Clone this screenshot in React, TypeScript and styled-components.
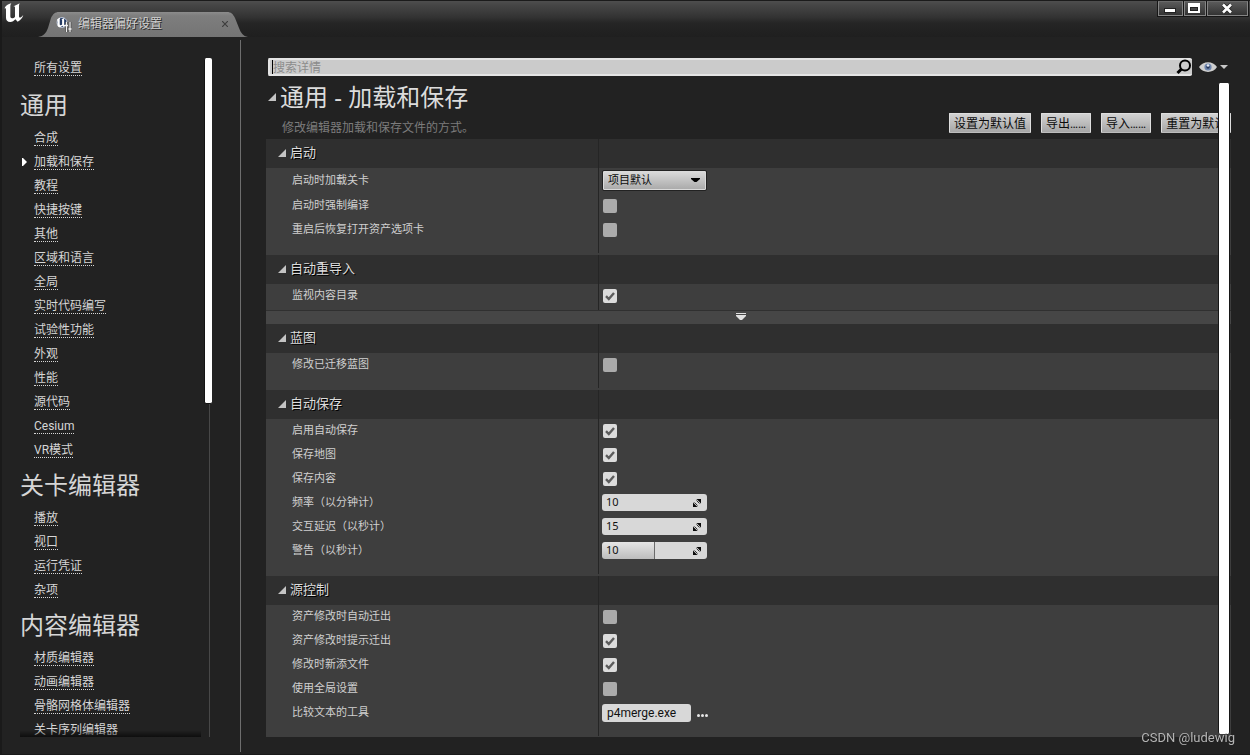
import React, { useState } from "react";
import styled, { createGlobalStyle } from "styled-components";

const GlobalStyle = createGlobalStyle`
  *, *::before, *::after { box-sizing: border-box; }
  body {
    margin: 0;
    background: #222222;
    color: #d6d6d6;
    font: 12px/16px Roboto, "Noto Sans CJK SC", sans-serif;
  }
  button, input, select { font: inherit; margin: 0; }
  ul { margin: 0; padding: 0; list-style: none; }
  h1, h2, h3, p { margin: 0; font-weight: 400; }
`;

const Window = styled.div`
  display: flex;
  flex-direction: column;
  height: 100vh;
  border: solid #1a1a1a;
  border-width: 0 0 1px 2px;
  background: #222222;
  overflow: hidden;
`;

const TitleBar = styled.header`
  display: flex;
  align-items: flex-start;
  flex: none;
  height: 37px;
  border-top: 1px solid #1b1b1b;
  background: linear-gradient(#4e4e4e 0px, #464646 4px, #333333 16px, #252525 22px, #1f1f1f 36px);
`;

const EngineLogo = styled.svg`
  flex: none;
  width: 20px;
  height: 20px;
  margin: 2px 0 0 2px;
`;

const Tab = styled.div`
  position: relative;
  display: flex;
  align-items: center;
  flex: none;
  width: 210px;
  height: 25px;
  margin: 11px 0 0 14px;
  padding: 0 18px 0 18px;
`;

const TabShape = styled.svg`
  position: absolute;
  inset: 0;
  width: 100%;
  height: 100%;
`;

const TabIcon = styled.svg`
  position: relative;
  flex: none;
  width: 16px;
  height: 16px;
`;

const TabTitle = styled.span`
  position: relative;
  flex: 1;
  margin-left: 6px;
  padding-bottom: 2px;
  color: #cfcfcf;
  text-shadow: 1px 1px 0 #2a2a2a;
`;

const TabClose = styled.button`
  position: relative;
  display: grid;
  place-items: center;
  width: 10px;
  height: 18px;
  padding: 0 0 2px;
  border: 0;
  background: none;
`;

const WindowControls = styled.div`
  display: flex;
  gap: 1px;
  margin-left: auto;
  margin-right: 1px;
  padding: 0 1px 1px;
  background: #161616;
`;

const ControlButton = styled.button<{ $width: number }>`
  display: grid;
  place-items: center;
  width: ${(p) => p.$width}px;
  height: 15px;
  padding: 0 2px 1px 0;
  border: 1px solid #858585;
  border-top-color: #6a6a6a;
  background: linear-gradient(#5a5a5a, #333333);
`;

const Body = styled.div`
  display: flex;
  flex: 1;
  min-height: 0;
  padding: 3px 0 2px;
`;

const Sidebar = styled.nav`
  display: flex;
  flex: none;
  width: 239px;
  padding: 16px 28px 15px 18px;
  border-right: 1px solid #6e6e6e;
`;

const SidebarScroll = styled.div`
  position: relative;
  flex: 1;
  margin-right: 3px;
  overflow: hidden;
  &::after {
    content: "";
    position: absolute;
    left: 0;
    right: 0;
    bottom: 0;
    height: 7px;
    background: linear-gradient(rgba(0, 0, 0, 0), rgba(0, 0, 0, 0.6));
  }
`;

const SidebarTrack = styled.div`
  width: 8px;
  margin-top: 2px;
  background: linear-gradient(#484848, #484848) 5px 0 / 1px 100% no-repeat;
`;

const SidebarThumb = styled.div`
  height: 51%;
  border: 1px solid #141414;
  border-width: 0 0 1px 1px;
  border-radius: 2px;
  background: #ffffff;
`;

const CategoryTitle = styled.h2`
  height: 44px;
  padding-top: 2px;
  font-size: 24px;
  line-height: 44px;
`;

const NavItem = styled.li<{ $current?: boolean }>`
  display: flex;
  align-items: center;
  height: 24px;
  padding-left: ${(p) => (p.$current ? 1 : 14)}px;
`;

const NavLink = styled.a`
  border-bottom: 1px dotted #d6d6d6;
  color: #d6d6d6;
  line-height: 14px;
  text-decoration: none;
  white-space: nowrap;
`;

const CurrentMark = styled.svg`
  width: 6px;
  height: 8px;
  margin-right: 7px;
`;

const Main = styled.main`
  display: flex;
  flex-direction: column;
  flex: 1;
  min-width: 0;
  padding: 17px 19px 15px 25px;
`;

const SearchRow = styled.div`
  display: flex;
  align-items: center;
  flex: none;
  height: 20px;
  padding: 0 3px 0 2px;
`;

const SearchBox = styled.label`
  display: flex;
  align-items: center;
  flex: 1;
  height: 18px;
  padding: 0 0 0 2px;
  border: 2px solid #e4e4e4;
  border-right-width: 0;
  border-radius: 2px;
  background: #cbcbcb;
`;

const SearchInput = styled.input`
  flex: 1;
  min-width: 0;
  height: 14px;
  padding: 1px 0 0;
  border: 0;
  border-left: 1px solid #000000;
  outline: 0;
  background: none;
  color: #111111;
  &::placeholder { color: #8c8c8c; opacity: 1; }
`;

const ViewOptions = styled.button`
  display: flex;
  align-items: center;
  gap: 3px;
  margin-left: 7px;
  padding: 0;
  border: 0;
  background: none;
`;

const Details = styled.div`
  position: relative;
  flex: 1;
  min-height: 0;
  overflow: hidden;
`;

const DetailsThumb = styled.div`
  position: absolute;
  top: 6px;
  right: 1px;
  bottom: 3px;
  width: 12px;
  border: solid #161616;
  border-width: 0 1px;
  border-radius: 2px;
  background: #ffffff;
`;

const PageHeader = styled.div`
  display: flex;
  align-items: flex-end;
  height: 62px;
`;

const PageHeading = styled.div`
  flex: 1;
  min-width: 0;
  height: 100%;
`;

const PageTitle = styled.h1`
  display: flex;
  align-items: center;
  gap: 4px;
  height: 38px;
  padding-left: 2px;
  padding-top: 2px;
  color: #dcdcdc;
  font-family: "Noto Sans", "Noto Sans CJK SC", sans-serif;
  font-size: 24px;
  line-height: 32px;
`;

const PageNote = styled.p`
  padding: 5px 0 0 16px;
  color: #7c7c7c;
`;

const Actions = styled.div`
  display: flex;
  gap: 10px;
  flex: 0 0 282px;
  min-width: 0;
  width: 282px;
  padding-bottom: 6px;
`;

const ActionButton = styled.button<{ $fit?: boolean }>`
  flex: ${(p) => (p.$fit ? "0 1 auto" : "none")};
  min-width: 0;
  height: 20px;
  padding: 1px 4px 0;
  border: 1px solid #dedede;
  border-bottom-color: #bcbcbc;
  border-radius: 1px;
  background: linear-gradient(#d2d2d2, #a6a6a6);
  color: #0c0c0c;
  line-height: 18px;
  overflow: hidden;
  text-align: left;
  white-space: nowrap;
`;

const Section = styled.section`
  background: linear-gradient(#252525, #252525) 332px 0 / 1px calc(100% - 2px) no-repeat, #3e3e3e;
`;

const SectionHeader = styled.h3`
  display: flex;
  align-items: center;
  gap: 4px;
  height: 29px;
  padding: 0 0 2px 12px;
  background: linear-gradient(#252525, #252525) 332px 0 / 1px 100% no-repeat, #2f2f2f;
  color: #dcdcdc;
  font-size: 13px;
  line-height: 27px;
  text-shadow: 1px 1px 0 #000000;
`;

const Rows = styled.div<{ $tight?: boolean }>`
  padding-bottom: ${(p) => (p.$tight ? 2 : 13)}px;
`;

const Row = styled.div<{ $tall?: boolean }>`
  display: grid;
  grid-template-columns: 310px 1fr;
  align-items: center;
  height: ${(p) => (p.$tall ? 26 : 24)}px;
  padding-left: 26px;
`;

const RowLabel = styled.label`
  color: #d0d0d0;
  font-size: 11px;
`;

const RowValue = styled.div`
  display: flex;
  align-items: center;
  gap: 6px;
`;

const Expander = styled.button`
  display: grid;
  place-items: center;
  width: 100%;
  height: 14px;
  padding: 0 15px 2px 0;
  border: 0;
  border-top: 1px solid #303030;
  background: #464646;
`;

const SelectBox = styled.span`
  display: grid;
  align-items: center;
  width: 105px;
  height: 21px;
  margin-bottom: 2px;
  & > * { grid-area: 1 / 1; }
  & > svg { justify-self: end; margin-right: 7px; pointer-events: none; }
`;

const Select = styled.select`
  appearance: none;
  width: 100%;
  height: 21px;
  padding: 2px 20px 0 5px;
  border: 1px solid #222222;
  border-radius: 2px;
  background: linear-gradient(#dcdcdc, #a8a8a8);
  box-shadow: inset 0 0 0 1px #dadada;
  color: #0c0c0c;
  font-size: 11px;
`;

const CheckBox = styled.span`
  display: grid;
  place-items: center;
  width: 14px;
  height: 14px;
  margin-left: 1px;
  & > * { grid-area: 1 / 1; }
  & > svg { pointer-events: none; }
`;

const CheckInput = styled.input`
  appearance: none;
  width: 14px;
  height: 14px;
  border-radius: 2px;
  background: #ababab;
  &:checked { background: #dcdcdc; }
  &:not(:checked) + svg { visibility: hidden; }
`;

const SpinBox = styled.span<{ $fill?: boolean }>`
  display: flex;
  align-items: center;
  width: 105px;
  height: 17px;
  margin-bottom: 1px;
  padding: 0 6px 0 4px;
  border-radius: 3px;
  background: ${(p) =>
    p.$fill
      ? "linear-gradient(#6b6b6b, #6b6b6b) 52px 0 / 1px 100% no-repeat, linear-gradient(#e6e6e6, #bdbdbd) 0 0 / 52px 100% no-repeat, #d8d8d8"
      : "#d8d8d8"};
`;

const SpinInput = styled.input`
  flex: 1;
  min-width: 0;
  height: 17px;
  padding: 0 0 2px;
  border: 0;
  background: none;
  color: #111111;
  font-family: "Noto Sans", sans-serif;
  font-size: 11px;
`;

const TextInput = styled.input`
  width: 89px;
  height: 18px;
  padding: 0 5px;
  border: 0;
  border-radius: 3px;
  background: #d8d8d8;
  color: #111111;
`;

const BrowseButton = styled.button`
  display: grid;
  place-items: center;
  height: 18px;
  padding: 5px 0 0;
  border: 0;
  background: none;
`;

const Watermark = styled.div`
  position: fixed;
  right: 15px;
  bottom: 9px;
  color: #b4b4b4;
  font-size: 13px;
  text-shadow: 1px 1px 0 #222222;
`;

const AllSettings = styled.div`
  display: flex;
  align-items: center;
  height: 24px;
  margin-bottom: 2px;
  padding-left: 14px;
`;

const U_PATH =
  "M1 17C5 8 12 3 22 1C19 5 19 8 19 12V40C19 44 21 46 24 46C28 46 31 44 33 41V13C33 11 31 10 28 10C34 8 39 5 47 1C45 5 45 8 45 12V40C45 44 48 45 52 42L58 36C55 46 49 52 41 56L34 49C30 54 25 57 19 57C10 57 6 51 6 44V20C6 16 4 15 1 17Z";

const Triangle = () => (
  <svg width="8" height="8" viewBox="0 0 8 8" aria-hidden="true">
    <path d="M8 0V8H0Z" fill="#c4c4c4" />
  </svg>
);

const Check = ({ id, on }: { id: string; on?: boolean }) => {
  const [checked, setChecked] = useState(!!on);
  return (
    <CheckBox>
      <CheckInput id={id} type="checkbox" checked={checked} onChange={() => setChecked(!checked)} />
      <svg width="10" height="10" viewBox="0 0 10 10" aria-hidden="true">
        <path d="M1 5.2L3.8 8L9 2" fill="none" stroke="#5c5c5c" strokeWidth="2.4" />
      </svg>
    </CheckBox>
  );
};

const Spin = ({ id, value, fill }: { id: string; value: string; fill?: boolean }) => (
  <SpinBox $fill={fill}>
    <SpinInput id={id} type="text" inputMode="numeric" defaultValue={value} />
    <svg width="8" height="8" viewBox="0 0 8 8" aria-hidden="true">
      <path d="M3 0H8V5Q6.800 1.200 3 0ZM3.500 0H8V4.500ZM0 3V8H5Q1.200 6.800 0 3ZM0 3.500V8H4.500Z" fill="#0a0a0a" />
      <path d="M3.500 1.500L6.500 4.500M1.500 3.500L4.500 6.500" stroke="#0a0a0a" strokeWidth="0.800" />
    </svg>
  </SpinBox>
);

type Setting = { label: string; kind: "check" | "spin" | "select" | "text"; on?: boolean; value?: string; fill?: boolean };
type Group = { title: string; more?: boolean; rows: Setting[] };

const groups: Group[] = [
  {
    title: "启动",
    rows: [
      { label: "启动时加载关卡", kind: "select", value: "项目默认" },
      { label: "启动时强制编译", kind: "check" },
      { label: "重启后恢复打开资产选项卡", kind: "check" },
    ],
  },
  { title: "自动重导入", more: true, rows: [{ label: "监视内容目录", kind: "check", on: true }] },
  { title: "蓝图", rows: [{ label: "修改已迁移蓝图", kind: "check" }] },
  {
    title: "自动保存",
    rows: [
      { label: "启用自动保存", kind: "check", on: true },
      { label: "保存地图", kind: "check", on: true },
      { label: "保存内容", kind: "check", on: true },
      { label: "频率（以分钟计）", kind: "spin", value: "10" },
      { label: "交互延迟（以秒计）", kind: "spin", value: "15" },
      { label: "警告（以秒计）", kind: "spin", value: "10", fill: true },
    ],
  },
  {
    title: "源控制",
    rows: [
      { label: "资产修改时自动迁出", kind: "check" },
      { label: "资产修改时提示迁出", kind: "check", on: true },
      { label: "修改时新添文件", kind: "check", on: true },
      { label: "使用全局设置", kind: "check" },
      { label: "比较文本的工具", kind: "text", value: "p4merge.exe" },
    ],
  },
];

const categories = [
  {
    title: "通用",
    items: ["合成", "加载和保存", "教程", "快捷按键", "其他", "区域和语言", "全局", "实时代码编写", "试验性功能", "外观", "性能", "源代码", "Cesium", "VR模式"],
  },
  { title: "关卡编辑器", items: ["播放", "视口", "运行凭证", "杂项"] },
  { title: "内容编辑器", items: ["材质编辑器", "动画编辑器", "骨骼网格体编辑器", "关卡序列编辑器"] },
];

const SettingControl = ({ id, s }: { id: string; s: Setting }) => {
  if (s.kind === "check") return <Check id={id} on={s.on} />;
  if (s.kind === "spin") return <Spin id={id} value={s.value!} fill={s.fill} />;
  if (s.kind === "select")
    return (
      <SelectBox>
        <Select id={id}>
          <option>{s.value}</option>
        </Select>
        <svg width="9" height="4" viewBox="0 0 9 4" aria-hidden="true">
          <path d="M0 0H9V1L5.500 4H3.500L0 1Z" fill="#000" />
        </svg>
      </SelectBox>
    );
  return (
    <>
      <TextInput id={id} type="text" defaultValue={s.value} />
      <BrowseButton aria-label="浏览">
        <svg width="11" height="3" viewBox="0 0 11 3" aria-hidden="true">
          <g fill="#e6e6e6">
            <circle cx="1.5" cy="1.5" r="1.5" />
            <circle cx="5.5" cy="1.5" r="1.5" />
            <circle cx="9.5" cy="1.5" r="1.5" />
          </g>
        </svg>
      </BrowseButton>
    </>
  );
};

export default function App() {
  return (
    <Window>
      <GlobalStyle />
      <TitleBar>
        <EngineLogo viewBox="0 0 60 60" aria-hidden="true">
          <path d={U_PATH} fill="#fff" />
        </EngineLogo>
        <Tab>
          <TabShape viewBox="0 0 210 25" preserveAspectRatio="none" aria-hidden="true">
            <defs>
              <linearGradient id="tabFill" x1="0" y1="0" x2="0" y2="1">
                <stop offset="0" stopColor="#8c8c8c" />
                <stop offset="0.15" stopColor="#7e7e7e" />
                <stop offset="1" stopColor="#747474" />
              </linearGradient>
            </defs>
            <path d="M0 25C6 24 8 21 10 16L13 6C15 2 17 0 21 0H189C193 0 195 2 197 6L201 16C203 21 205 24 210 25Z" fill="url(#tabFill)" />
          </TabShape>
          <TabIcon viewBox="0 0 16 16" aria-hidden="true">
            <circle cx="6" cy="5.500" r="5" fill="#243a63" stroke="#b9c2d2" strokeWidth="1" />
            <path d={U_PATH} fill="#fff" transform="translate(0.500 0.500) scale(0.170)" />
            <path d="M10.500 5V15M14 5V15" stroke="#3a3a3a" strokeWidth="2.600" />
            <path d="M10.500 5V15M14 5V15M9 8.500H12M12.500 12H15.500" stroke="#f0f0f0" strokeWidth="1.300" />
          </TabIcon>
          <TabTitle>编辑器偏好设置</TabTitle>
          <TabClose aria-label="关闭标签页">
            <svg width="6" height="6" viewBox="0 0 6 6" aria-hidden="true">
              <path d="M0 0L6 6M6 0L0 6" stroke="#3e3e3e" strokeWidth="1.200" />
            </svg>
          </TabClose>
        </Tab>
        <WindowControls>
          <ControlButton $width={25} aria-label="最小化">
            <svg width="12" height="10" viewBox="0 0 12 10" aria-hidden="true">
              <rect x="0.500" y="5.500" width="11" height="4" fill="#fff" stroke="#222" />
            </svg>
          </ControlButton>
          <ControlButton $width={22} aria-label="最大化">
            <svg width="12" height="10" viewBox="0 0 12 10" aria-hidden="true">
              <path d="M0 0H12V10H0ZM2 4V8H10V4Z" fill="#fff" fillRule="evenodd" />
              <rect x="2.500" y="4.500" width="7" height="3" fill="none" stroke="#222" />
            </svg>
          </ControlButton>
          <ControlButton $width={41} aria-label="关闭">
            <svg width="12" height="11" viewBox="0 0 12 11" aria-hidden="true">
              <path d="M2 1.500L10 9.500M10 1.500L2 9.500" stroke="#222" strokeWidth="4" />
              <path d="M2 1.500L10 9.500M10 1.500L2 9.500" stroke="#fff" strokeWidth="2.600" />
            </svg>
          </ControlButton>
        </WindowControls>
      </TitleBar>
      <Body>
        <Sidebar>
          <SidebarScroll>
            <AllSettings>
              <NavLink href="#all">所有设置</NavLink>
            </AllSettings>
            {categories.map((c) => (
              <section key={c.title}>
                <CategoryTitle>{c.title}</CategoryTitle>
                <ul>
                  {c.items.map((item) => {
                    const current = item === "加载和保存";
                    return (
                      <NavItem key={item} $current={current}>
                        {current && (
                          <CurrentMark viewBox="0 0 6 8" aria-hidden="true">
                            <path d="M1 0H2L6 4L2 8H1Z" fill="#fff" />
                          </CurrentMark>
                        )}
                        <NavLink href={`#${item}`}>{item}</NavLink>
                      </NavItem>
                    );
                  })}
                </ul>
              </section>
            ))}
          </SidebarScroll>
          <SidebarTrack>
            <SidebarThumb />
          </SidebarTrack>
        </Sidebar>
        <Main>
          <SearchRow>
            <SearchBox>
              <SearchInput type="text" placeholder="搜索详情" aria-label="搜索详情" />
              <svg width="16" height="16" viewBox="0 0 16 16" aria-hidden="true">
                <circle cx="9" cy="6.500" r="5" fill="none" stroke="#000" strokeWidth="2" />
                <path d="M5.500 10L1.500 14" stroke="#000" strokeWidth="3" />
              </svg>
            </SearchBox>
            <ViewOptions aria-label="视图选项">
              <svg width="18" height="12" viewBox="0 0 18 12" aria-hidden="true">
                <path d="M0 6C4 -0.500 14 -0.500 18 6C14 12.500 4 12.500 0 6Z" fill="#cfcfcf" />
                <circle cx="9" cy="6" r="3.600" fill="#6f86ad" />
                <circle cx="9" cy="6" r="1.700" fill="#26375a" />
                <circle cx="9" cy="4.500" r="1.200" fill="#e8eef8" />
              </svg>
              <svg width="8" height="4" viewBox="0 0 8 4" aria-hidden="true">
                <path d="M0 0H8L4 4Z" fill="#c8c8c8" />
              </svg>
            </ViewOptions>
          </SearchRow>
          <Details>
            <PageHeader>
              <PageHeading>
                <PageTitle>
                  <Triangle />
                  通用 - 加载和保存
                </PageTitle>
                <PageNote>修改编辑器加载和保存文件的方式。</PageNote>
              </PageHeading>
              <Actions>
                <ActionButton>设置为默认值</ActionButton>
                <ActionButton>导出……</ActionButton>
                <ActionButton>导入……</ActionButton>
                <ActionButton $fit>重置为默认值</ActionButton>
              </Actions>
            </PageHeader>
            {groups.map((g, gi) => (
              <Section key={g.title}>
                <SectionHeader>
                  <Triangle />
                  {g.title}
                </SectionHeader>
                <Rows $tight={g.more}>
                  {g.rows.map((s, i) => {
                    const id = `setting-${gi}-${i}`;
                    return (
                      <Row key={id} $tall={s.kind === "select"}>
                        <RowLabel htmlFor={id}>{s.label}</RowLabel>
                        <RowValue>
                          <SettingControl id={id} s={s} />
                        </RowValue>
                      </Row>
                    );
                  })}
                </Rows>
                {g.more && (
                  <Expander aria-label="显示高级">
                    <svg width="10" height="7" viewBox="0 0 10 7" aria-hidden="true">
                      <path d="M0 0H10V1H0ZM0 2H10V3L6 7H4L0 3Z" fill="#e0e0e0" />
                    </svg>
                  </Expander>
                )}
              </Section>
            ))}
            <DetailsThumb />
          </Details>
        </Main>
      </Body>
      <Watermark>CSDN @ludewig</Watermark>
    </Window>
  );
}
